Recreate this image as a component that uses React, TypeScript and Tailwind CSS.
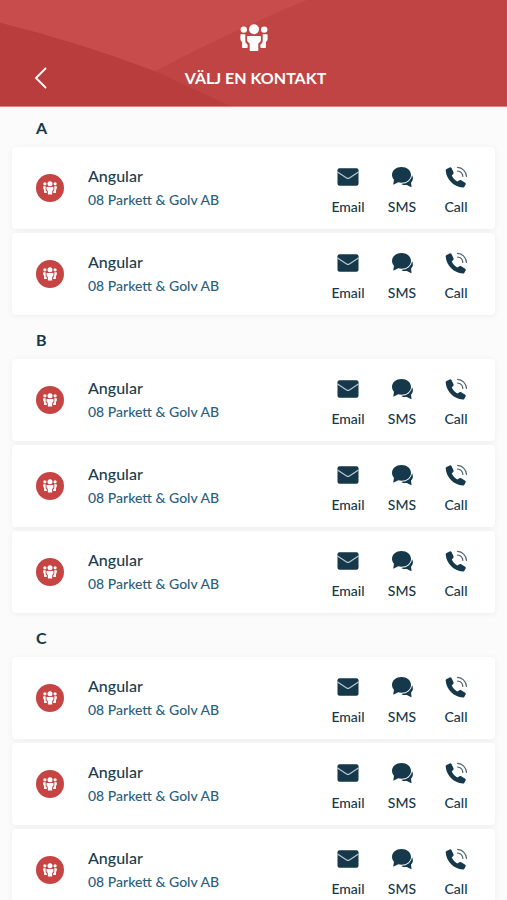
type Contact = { id: number; name: string; company: string }

const GROUPS: { letter: string; contacts: Contact[] }[] = [
  {
    letter: 'A',
    contacts: [
      { id: 1, name: 'Angular', company: '08 Parkett & Golv AB' },
      { id: 2, name: 'Angular', company: '08 Parkett & Golv AB' },
    ],
  },
  {
    letter: 'B',
    contacts: [
      { id: 3, name: 'Angular', company: '08 Parkett & Golv AB' },
      { id: 4, name: 'Angular', company: '08 Parkett & Golv AB' },
      { id: 5, name: 'Angular', company: '08 Parkett & Golv AB' },
    ],
  },
  {
    letter: 'C',
    contacts: [
      { id: 6, name: 'Angular', company: '08 Parkett & Golv AB' },
      { id: 7, name: 'Angular', company: '08 Parkett & Golv AB' },
      { id: 8, name: 'Angular', company: '08 Parkett & Golv AB' },
    ],
  },
]

function PeopleIcon({ className }: { className?: string }) {
  return (
    <svg viewBox="0 0 28 28" fill="currentColor" className={className} aria-hidden="true">
      <circle cx="14" cy="5.300" r="5" />
      <circle cx="3.800" cy="5.600" r="3.200" />
      <circle cx="24.200" cy="5.600" r="3.200" />
      <path d="M7.800 12h12.400c.4 0 .7.300.7.700v3.100c0 1.500-.8 2.500-2.600 3.600v7c0 .4-.3.700-.7.700h-7.200c-.4 0-.7-.3-.7-.7v-7c-1.800-1.100-2.600-2.100-2.600-3.600v-3.100c0-.4.300-.7.700-.7z" />
      <path d="M1 10.300h4.300v6c0 2 .6 3.300 2.300 4.300v2.700c0 .4-.3.700-.7.700H2.800c-.4 0-.7-.3-.7-.7v-5.400C.9 16.900.4 16 .4 14.700v-3.800c0-.3.300-.6.600-.6z" />
      <path d="M27 10.300h-4.300v6c0 2-.6 3.300-2.300 4.300v2.700c0 .4.300.7.700.7h4.100c.4 0 .7-.3.700-.7v-5.400c1.200-1 1.700-1.900 1.700-3.200v-3.800c0-.3-.3-.6-.6-.6z" />
    </svg>
  )
}

function MailIcon() {
  return (
    <svg viewBox="0 0 24 24" className="h-6 w-6" aria-hidden="true">
      <rect x="1.500" y="3.200" width="21" height="17.600" rx="2" fill="currentColor" />
      <path d="M1.500 7 10.600 12.900a2.600 2.600 0 0 0 2.800 0L22.500 7" fill="none" stroke="#b9c8cf" strokeWidth="1.200" />
    </svg>
  )
}

function ChatIcon() {
  return (
    <svg viewBox="0 0 24 24" className="h-6 w-6" aria-hidden="true">
      <path
        d="M22.200 10.600c.5 1 .7 2 .7 3 0 1.700-.8 3.100-1.900 4.100l.5 3.900c.1.500-.3.700-.7.500l-3.900-2.200c-1.900.4-4 .1-5.600-1z"
        fill="currentColor"
      />
      <path
        d="M11.500 2C6.200 2 2 5.300 2 9.800c0 2 .8 3.700 2 5L3.300 18.900c-.1.400.2.600.6.500l4.300-2.100c1 .3 2.200.5 3.300.5 5.300 0 9.500-3.500 9.500-8S16.800 2 11.500 2z"
        fill="currentColor"
        stroke="#fff"
        strokeWidth="2"
        paintOrder="stroke"
      />
    </svg>
  )
}

function CallIcon() {
  return (
    <svg viewBox="0 0 24 24" className="h-6 w-6" aria-hidden="true">
      <path
        d="M2.600 4.100 5.700 2.500c.7-.3 1.400-.1 1.800.6l2 4.200c.3.600.2 1.200-.3 1.700L7.700 10.600c1.300 2.600 3.100 4.400 5.600 6l2.200-1.300c.5-.4 1.100-.4 1.700 0l4 2.500c.6.400.7 1 .4 1.600l-1.400 2.500c-.3.500-.8.800-1.400.7C9.600 21.900 2.300 14.300 1.700 5.500c0-.6.3-1.100.9-1.400z"
        fill="currentColor"
      />
      <g fill="none" stroke="#52666f" strokeWidth="1.200" strokeLinecap="round">
        <path d="M13.500 2.400c4.900.3 8.600 4 9 9" />
        <path d="M13.500 6c3 .3 5.100 2.400 5.400 5.400" />
      </g>
    </svg>
  )
}

const ACTIONS = [
  { label: 'Email', Icon: MailIcon },
  { label: 'SMS', Icon: ChatIcon },
  { label: 'Call', Icon: CallIcon },
]

function ContactCard({ contact }: { contact: Contact }) {
  return (
    <li className="flex h-[82px] items-center rounded-sm bg-white pr-3 pl-6 shadow-[0_1px_6px_rgba(0,0,0,0.06)]">
      <span className="flex h-7 w-7 shrink-0 items-center justify-center rounded-full bg-[#c74444] text-white">
        <PeopleIcon className="h-[14px] w-[14px]" />
      </span>
      <div className="ml-6 min-w-0 flex-1">
        <p className="truncate text-base leading-6 font-medium text-[#1b3d4d]">{contact.name}</p>
        <p className="truncate text-sm leading-6 font-medium text-[#2b607b]">{contact.company}</p>
      </div>
      <div className="flex shrink-0 pt-1.5">
        {ACTIONS.map(({ label, Icon }) => (
          <button key={label} type="button" className="flex w-[54px] flex-col items-center gap-2 text-[#15384a]">
            <Icon />
            <span className="text-sm leading-5 font-medium">{label}</span>
          </button>
        ))}
      </div>
    </li>
  )
}

function Header() {
  return (
    <header className="relative h-[107px] shrink-0 overflow-hidden border-b border-[#df8080] bg-[#c04443] text-white">
      <svg viewBox="0 0 507 107" preserveAspectRatio="none" className="absolute inset-0 h-full w-full" aria-hidden="true">
        <path d="M0 0H307Q230 32 155 72L0 23z" fill="#c74c4b" />
        <path d="M0 23Q80 43 155 72L230 107H0z" fill="#b83d3c" />
      </svg>
      <div className="relative flex flex-col items-center pt-6">
        <PeopleIcon className="h-7 w-7" />
        <div className="mt-3 grid w-full grid-cols-[1fr_auto_1fr] items-center pr-7 pl-8">
          <button type="button" aria-label="Tillbaka" className="w-4">
            <svg viewBox="0 0 16 24" className="h-6 w-4" fill="none" stroke="currentColor" strokeWidth="1.800" strokeLinecap="round" strokeLinejoin="round" aria-hidden="true">
              <path d="M13.500 2.500 4 12l9.500 9.500" />
            </svg>
          </button>
          <h1 className="text-base leading-7 font-bold">VÄLJ EN KONTAKT</h1>
        </div>
      </div>
    </header>
  )
}

export default function App() {
  return (
    <div className="flex h-screen flex-col bg-[#fbfbfc] font-['Lato',sans-serif]">
      <Header />
      <main className="flex min-h-0 flex-1 flex-col gap-1 overflow-y-auto px-3 [scrollbar-width:none]">
        {GROUPS.map(group => (
          <section key={group.letter}>
            <h2 className="flex h-10 items-center pt-0.5 pl-6 text-base font-bold text-[#15384a]">{group.letter}</h2>
            <ul className="flex flex-col gap-1">
              {group.contacts.map(contact => (
                <ContactCard key={contact.id} contact={contact} />
              ))}
            </ul>
          </section>
        ))}
      </main>
    </div>
  )
}
